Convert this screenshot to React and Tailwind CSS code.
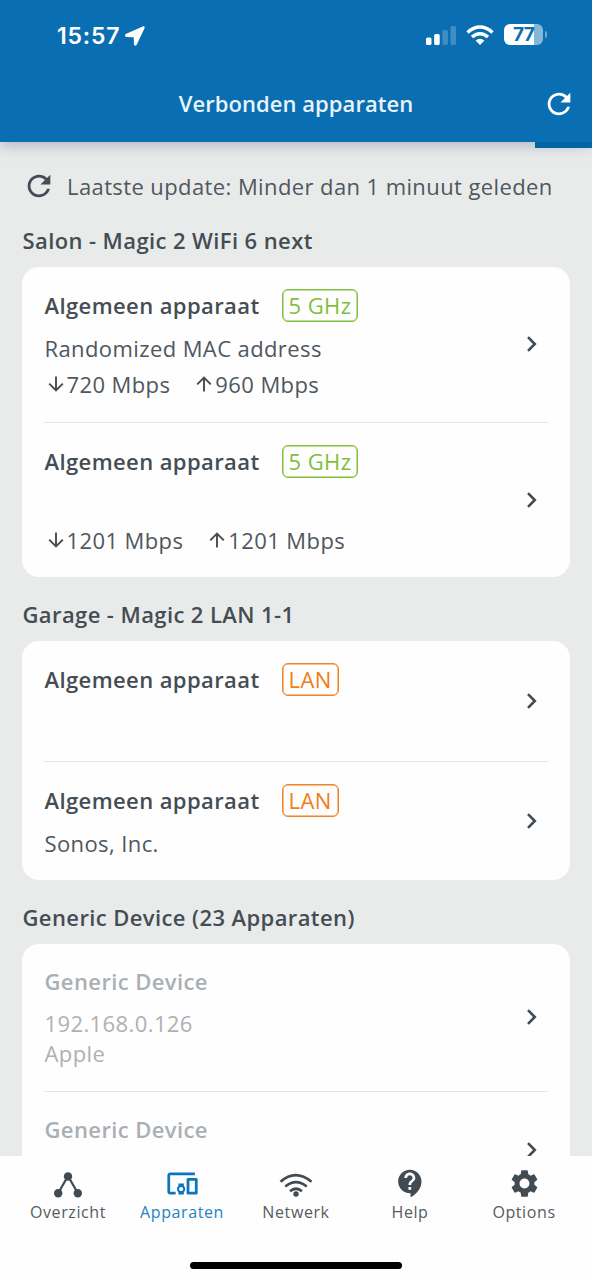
import { MdRefresh, MdDevicesOther, MdContactSupport, MdSettings } from "react-icons/md";

function Arrow({ up }) {
  return (
    <svg viewBox="0 0 16 16" className={up ? "size-4 rotate-180" : "size-4"} fill="none" stroke="#454c52" strokeWidth="1.9">
      <path d="M8 .5v14M1.200 7.600l6.800 6.800 6.800-6.800" />
    </svg>
  );
}

function Chevron() {
  return (
    <svg viewBox="0 0 10 16" className="-mt-px h-4 w-[10px] shrink-0" fill="none" stroke="#434b52" strokeWidth="2.6">
      <path d="M1 1.2l6.8 6.8L1 14.8" />
    </svg>
  );
}

function Tag({ label }) {
  const tone = label === "LAN" ? "border-[#ef8425] text-[#ef7d18]" : "border-[#7fbf3a] text-[#7fbf3a]";
  return (
    <span className={`ml-[22px] flex h-[33px] items-center rounded-[6px] border px-[6px] text-[22px] shadow-[inset_0_0_0_0.5px_currentColor] ${tone}`}>
      <span className="tracking-[0.4px]">{label}</span>
    </span>
  );
}

function Device({ name, tag, detail, down, up, height }) {
  return (
    <div className={`flex items-center pr-[11px] ${height}`}>
      <div className="flex h-full flex-1 flex-col pl-[0.5px] pt-[22px]">
        <div className="flex h-[33px] items-center">
          <span className="text-[22px] font-semibold tracking-[0.4px] text-[#454d54]">{name}</span>
          <Tag label={tag} />
        </div>
        <div className="mt-[8px] h-9 leading-9">{detail}</div>
        {down && (
          <div className="flex h-9 items-center">
            <span className="ml-[3px] flex items-center gap-[3px]"><Arrow />{down}</span>
            <span className="ml-[26px] flex items-center gap-[3px]"><Arrow up />{up}</span>
          </div>
        )}
      </div>
      <Chevron />
    </div>
  );
}

function Card({ children }) {
  return <div className="mx-[22px] rounded-[17px] bg-[#fefefe] px-[22px]">{children}</div>;
}

function Divider() {
  return <div className="h-px bg-[#e3e5e6]" />;
}

function Section({ children }) {
  return <h2 className="pl-[22.5px] text-[22px] font-semibold leading-[30px] tracking-[0.4px] text-[#454d54]">{children}</h2>;
}

function Generic({ children }) {
  return <div className="text-[22px] font-semibold leading-[30px] tracking-[0.4px] text-[#aaafb3]">{children}</div>;
}

function StatusBar() {
  return (
    <div className="flex h-[70px] items-center pl-[57px] pr-[45px] text-white">
      <span className="mt-px font-['Inter',sans-serif] text-[23px] font-semibold leading-7 tracking-[0.8px]">15:57</span>
      <svg viewBox="0 0 20 20" className="ml-[5px] mt-px size-5" fill="white">
        <path d="M17.800 .5 1.300 7.700C-.5 8.500-.2 10.900 1.600 11l6.500.2c.5 0 .7.2.7.7l.1 6.100c0 2 2.100 2.300 2.900.5L19.500 2.200c.5-1.200-.5-2.200-1.700-1.700Z" />
      </svg>
      <div className="-mt-px ml-auto flex items-center">
        <svg viewBox="0 0 31 20" className="h-5 w-[31px]" fill="white">
          <rect x="1" y="12.500" width="5.500" height="7.500" rx="1.500" />
          <rect x="9.200" y="9" width="5.500" height="11" rx="1.500" />
          <rect x="17.400" y="5" width="5.500" height="15" rx="1.500" opacity=".22" />
          <rect x="25.500" y="1" width="5.500" height="19" rx="1.500" opacity=".22" />
        </svg>
        <svg viewBox="0 0 28 20" className="ml-[10px] h-5 w-7">
          <g fill="none" stroke="white" strokeWidth="3.500">
            <path d="M1.500 7.500Q7.500 2 14 2t12.500 5.500" />
            <path d="M6 12.100Q9.600 8.700 14 8.700t8 3.400" />
          </g>
          <path d="M9.500 15.500Q14 12 18.500 15.500L14 20Z" fill="white" />
        </svg>
        <div className="ml-[10px] flex h-[21px] w-[39px] items-center justify-center rounded-[6px] bg-linear-to-r from-white from-77% to-[#86b7da] to-77%">
          <span className="font-['Inter',sans-serif] text-[19px] font-bold leading-5 tracking-[-0.8px] text-[#0a6eb3]">77</span>
        </div>
        <div className="ml-[2px] h-[7px] w-[2px] rounded-r-full bg-[#6ba6d0]" />
      </div>
    </div>
  );
}

function Tab({ label, active, children }) {
  return (
    <div className={`flex w-[114px] flex-col items-center ${active ? "text-[#0d76bb]" : "text-[#434b52]"}`}>
      <div className="-mt-px mb-px flex h-[34px] items-center">{children}</div>
      <span className={`text-[16px] leading-[22px] tracking-[0.6px] ${active ? "text-[#2583c2]" : "text-[#555c62]"}`}>{label}</span>
    </div>
  );
}

export default function App() {
  return (
    <div className="flex h-[1280px] w-[592px] flex-col overflow-hidden bg-[#e9ebeb] font-['Open_Sans',sans-serif] text-[22px] tracking-[0.4px] text-[#50575d]">
      <header className="relative z-10 h-[142px] shrink-0 bg-[#0a6eb3] shadow-[0_3px_14px_rgba(60,80,120,0.35)]">
        <StatusBar />
        <div className="grid h-[67px] grid-cols-[1fr_auto_1fr] items-center">
          <h1 className="col-start-2 text-[22px] font-semibold tracking-[0.05px] text-[#e9f3fa]">Verbonden apparaten</h1>
          <MdRefresh className="mr-[16px] size-[34px] justify-self-end text-white" />
        </div>
        <div className="absolute right-0 top-[142px] h-[6px] w-[57px] bg-[#0565a3]" />
      </header>
      <main className="min-h-0 flex-1 overflow-hidden">
        <div className="flex h-[88px] items-center pl-[22px]">
          <MdRefresh className="size-[34px] shrink-0 text-[#454d54]" />
          <span className="ml-[11px] whitespace-nowrap">Laatste update: Minder dan 1 minuut geleden</span>
        </div>
        <div className="-mt-[5px] h-[42px]"><Section>Salon - Magic 2 WiFi 6 next</Section></div>
        <Card>
          <Device name="Algemeen apparaat" tag="5 GHz" detail="Randomized MAC address" down="720 Mbps" up="960 Mbps" height="h-[155px]" />
          <Divider />
          <Device name="Algemeen apparaat" tag="5 GHz" down="1201 Mbps" up="1201 Mbps" height="h-[154px]" />
        </Card>
        <div className="h-[64px] pt-[22px]"><Section>Garage - Magic 2 LAN 1-1</Section></div>
        <Card>
          <Device name="Algemeen apparaat" tag="LAN" height="h-[120px]" />
          <Divider />
          <Device name="Algemeen apparaat" tag="LAN" detail="Sonos, Inc." height="h-[118px]" />
        </Card>
        <div className="h-[64px] pt-[22px]"><Section>Generic Device (23 Apparaten)</Section></div>
        <Card>
          <div className="flex h-[147px] items-center pr-[11px]">
            <div className="h-full flex-1 pl-[0.5px] pt-[22px] leading-[30px] text-[#adb1b4]">
              <Generic>Generic Device</Generic>
              <div className="mt-[12px]">192.168.0.126</div>
              <div>Apple</div>
            </div>
            <Chevron />
          </div>
          <Divider />
          <div className="flex h-[116px] items-center pr-[11px]">
            <div className="h-full flex-1 pl-[0.5px] pt-[22px]"><Generic>Generic Device</Generic></div>
            <Chevron />
          </div>
        </Card>
      </main>
      <nav className="flex h-[124px] shrink-0 flex-col items-center bg-[#fefefe]">
        <div className="flex h-[109px] w-full justify-center pt-[11px]">
          <Tab label="Overzicht">
            <svg viewBox="0 0 28 26" className="mt-1 h-[26px] w-7" fill="currentColor">
              <path d="M4 21.500 14 4l10 17.500" fill="none" stroke="currentColor" strokeWidth="2.200" />
              <circle cx="14" cy="4.500" r="4.200" /><circle cx="4.200" cy="21.300" r="4.200" /><circle cx="23.800" cy="21.300" r="4.200" />
            </svg>
          </Tab>
          <Tab label="Apparaten" active><MdDevicesOther className="size-[33px]" /></Tab>
          <Tab label="Netwerk">
            <svg viewBox="0 0 34 24" className="mt-1 h-6 w-[34px]" fill="none" stroke="currentColor" strokeWidth="2.700">
              <path d="M1.500 8.800Q16.500-4.500 32.500 8.800M6.200 13.500Q17 4.800 27.800 13.500M11 18.300Q17 13.200 23 18.300" />
              <circle cx="17" cy="21" r="2.700" fill="currentColor" stroke="none" />
            </svg>
          </Tab>
          <Tab label="Help"><MdContactSupport className="size-[33px]" /></Tab>
          <Tab label="Options"><MdSettings className="size-[33px]" /></Tab>
        </div>
        <div className="-mt-[3px] h-[7px] w-[212px] rounded-full bg-black" />
      </nav>
    </div>
  );
}
